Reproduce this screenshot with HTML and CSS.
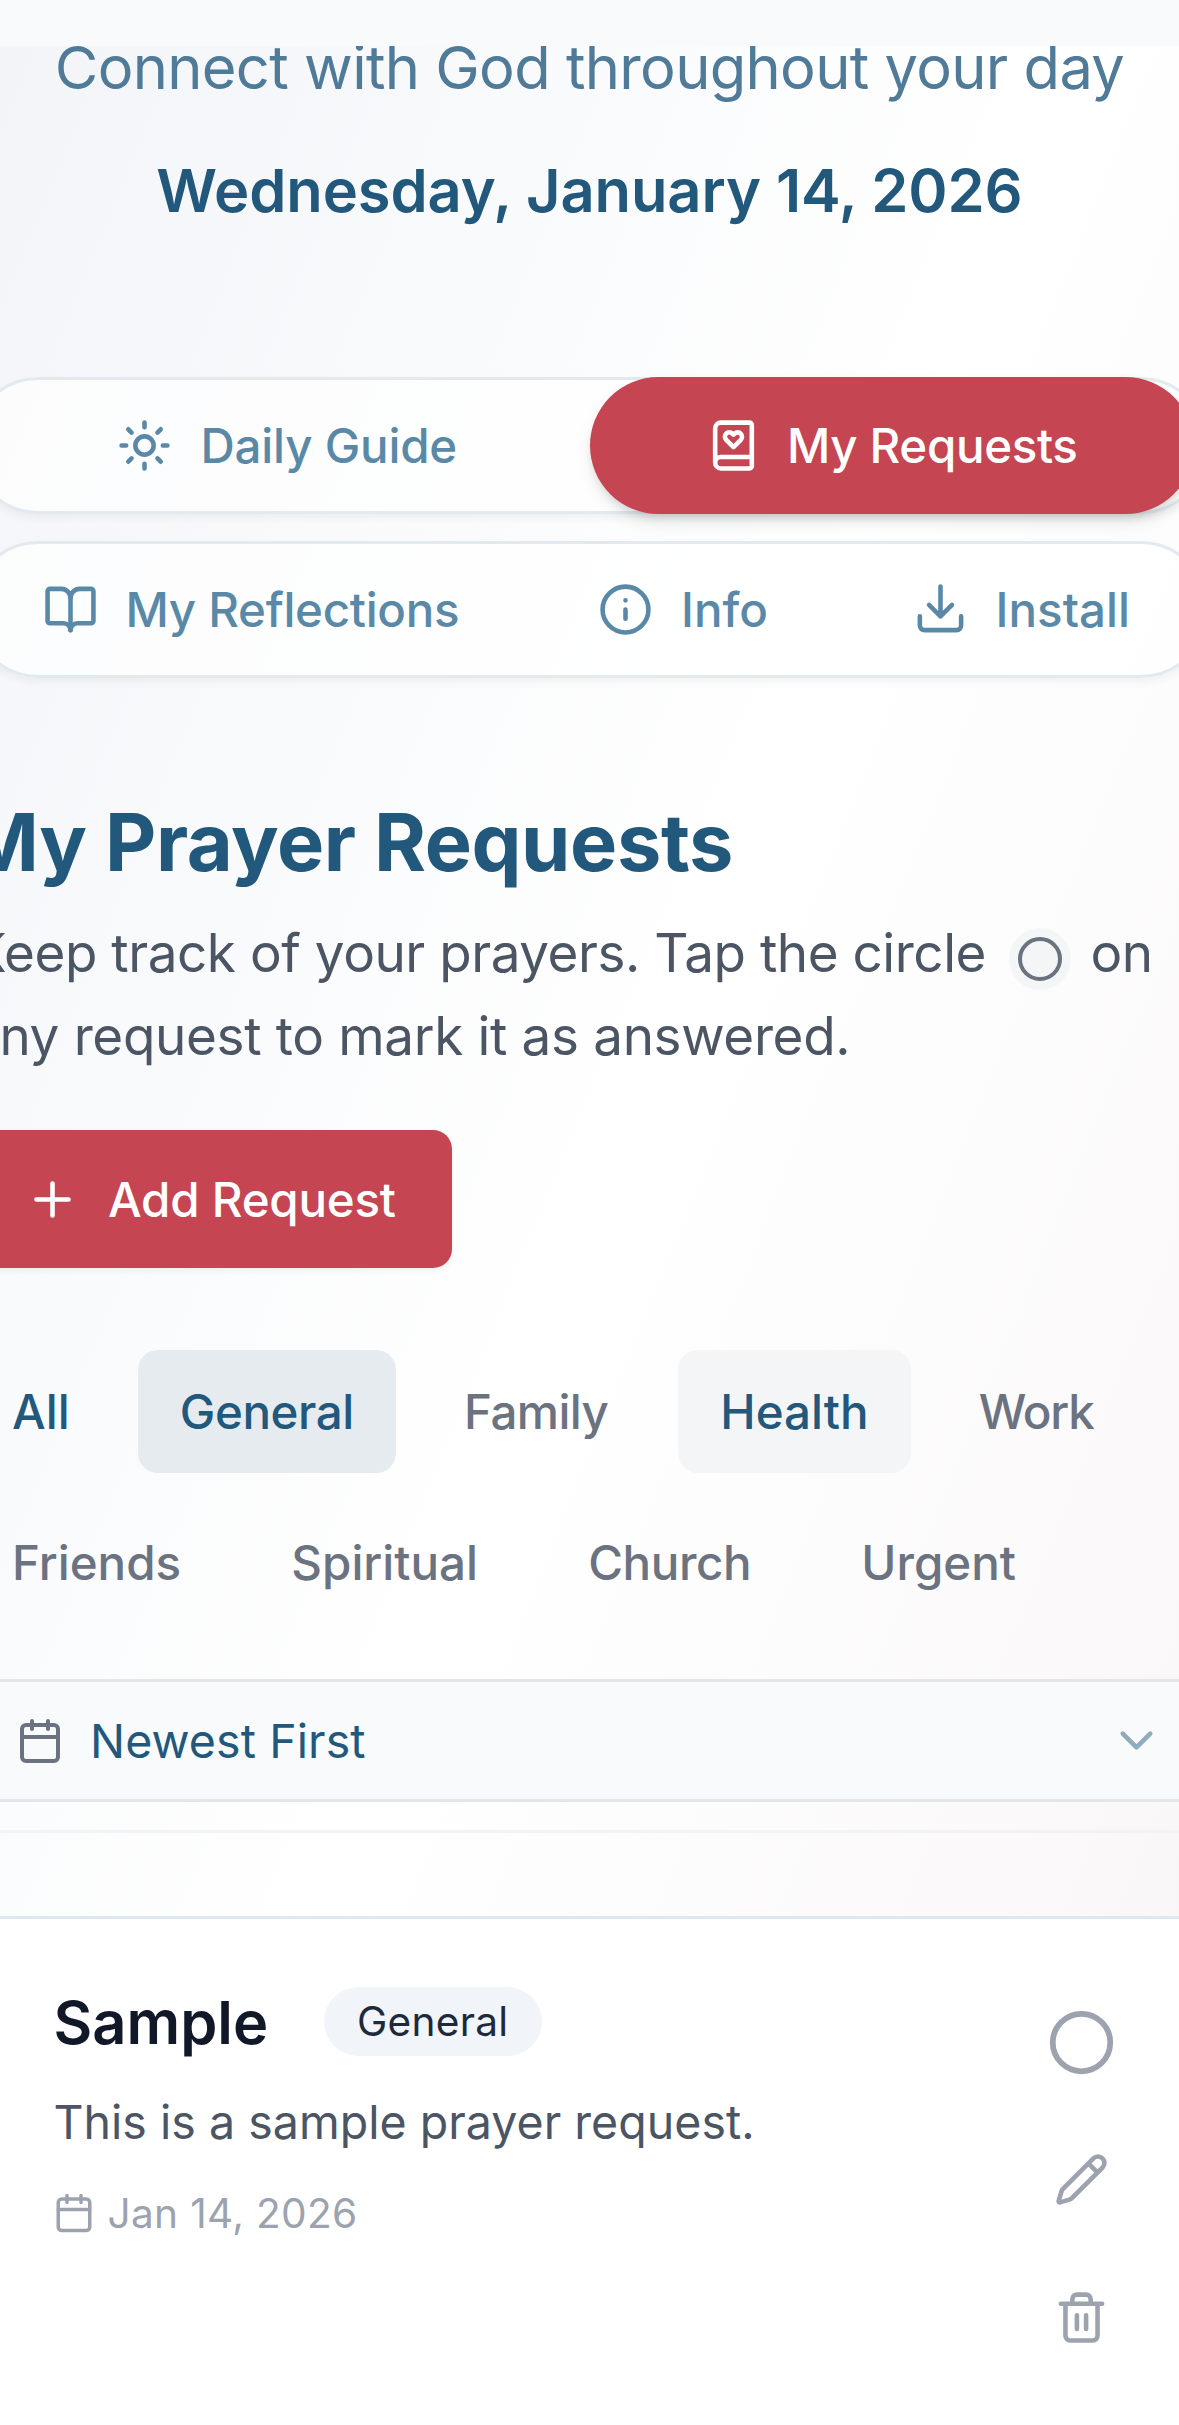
FILE: index.html
```html
<!DOCTYPE html>
<html lang="en">
<head>
<meta charset="utf-8">
<title>My Prayer Requests</title>
<link rel="stylesheet" href="styles.css">
</head>
<body>
<div class="statusbar"></div>
<div class="page">
  <header class="intro">
    <p class="tagline">Connect with God throughout your day</p>
    <p class="today">Wednesday, January 14, 2026</p>
  </header>

  <nav class="tabs">
    <div class="tab-row tab-row-split">
      <a class="tab"><svg class="icon" viewBox="0 0 24 24"><circle cx="12" cy="12" r="4"/><path d="M12 2v2M12 20v2M4.93 4.93l1.41 1.41M17.66 17.66l1.41 1.41M2 12h2M20 12h2M6.34 17.66l-1.41 1.41M19.07 4.93l-1.41 1.41"/></svg><span>Daily Guide</span></a>
      <a class="tab tab-active"><svg class="icon" viewBox="0 0 24 24"><path d="M4 19.5v-15A2.5 2.5 0 0 1 6.5 2H19a1 1 0 0 1 1 1v18a1 1 0 0 1-1 1H6.500a2.500 2.500 0 0 1 0-5H20"/><path d="M15.200 6.900a1.900 1.900 0 0 0-2.700-.1l-.5.5-.5-.5a1.900 1.900 0 0 0-2.700 2.700L12 12.700l3.200-3.200a1.900 1.900 0 0 0 0-2.600z"/></svg><span>My Requests</span></a>
    </div>
    <div class="tab-row tab-row-spread">
      <a class="tab tab-reflections"><svg class="icon" viewBox="0 0 24 24"><path d="M12 7v14"/><path d="M3 18a1 1 0 0 1-1-1V4a1 1 0 0 1 1-1h5a4 4 0 0 1 4 4 4 4 0 0 1 4-4h5a1 1 0 0 1 1 1v13a1 1 0 0 1-1 1h-6a3 3 0 0 0-3 3 3 3 0 0 0-3-3z"/></svg><span>My Reflections</span></a>
      <a class="tab tab-info"><svg class="icon" viewBox="0 0 24 24"><circle cx="12" cy="12" r="10"/><path d="M12 16v-4M12 8h.01"/></svg><span>Info</span></a>
      <a class="tab tab-install"><svg class="icon" viewBox="0 0 24 24"><path d="M21 15v4a2 2 0 0 1-2 2H5a2 2 0 0 1-2-2v-4"/><path d="m7 10 5 5 5-5M12 15V2"/></svg><span>Install</span></a>
    </div>
  </nav>

  <main>
    <h1 class="title">My Prayer Requests</h1>
    <p class="lead">Keep track of your prayers. Tap the circle <span class="hint"><svg viewBox="0 0 24 24"><circle cx="12" cy="12" r="10"/></svg></span> on<br><span class="lead-rest">any request to mark it as answered.</span></p>

    <button class="add"><svg class="icon" viewBox="0 0 24 24"><path d="M5 12h14M12 5v14"/></svg><span>Add Request</span></button>

    <div class="filters">
      <div class="filter-row">
        <button class="filter filter-blue">All</button>
        <button class="filter filter-blue filter-on snug">General</button>
        <button class="filter tight">Family</button>
        <button class="filter filter-blue filter-hover">Health</button>
        <button class="filter kerned">Work</button>
      </div>
      <div class="filter-row">
        <button class="filter">Friends</button>
        <button class="filter">Spiritual</button>
        <button class="filter snug">Church</button>
        <button class="filter">Urgent</button>
      </div>
    </div>

    <div class="sort">
      <svg class="sort-icon" viewBox="0 0 24 24"><path d="M8 2v4M16 2v4M3 10h18"/><rect x="3" y="4" width="18" height="18" rx="2"/></svg>
      <span class="sort-label">Newest First</span>
      <svg class="icon sort-arrow" viewBox="0 0 24 24"><path d="m6 9 6 6 6-6"/></svg>
    </div>

    <hr class="rule">

    <article class="card">
      <div class="card-body">
        <div class="card-head"><h2 class="card-title">Sample</h2><span class="badge">General</span></div>
        <p class="card-text">This is a sample prayer request.</p>
        <div class="card-date"><svg viewBox="0 0 24 24"><path d="M8 2v4M16 2v4M3 10h18"/><rect x="3" y="4" width="18" height="18" rx="2"/></svg><span>Jan 14, 2026</span></div>
      </div>
      <div class="actions">
        <button class="action"><svg class="ring" viewBox="0 0 24 24"><circle cx="12" cy="12" r="10"/></svg></button>
        <button class="action"><svg class="icon" viewBox="0 0 24 24"><path d="M21.174 6.812a1 1 0 0 0-3.986-3.987L3.842 16.174a2 2 0 0 0-.5.830l-1.321 4.352a.5.5 0 0 0 .623.622l4.353-1.320a2 2 0 0 0 .830-.497zM15 5l4 4"/></svg></button>
        <button class="action"><svg class="icon" viewBox="0 0 24 24"><path d="M3 6h18M19 6v14a2 2 0 0 1-2 2H7a2 2 0 0 1-2-2V6M8 6V4a2 2 0 0 1 2-2h4a2 2 0 0 1 2 2v2M10 11v6M14 11v6"/></svg></button>
      </div>
    </article>
  </main>
</div>
</body>
</html>
```
FILE: styles.css
```css
* { box-sizing: border-box; margin: 0; padding: 0; }

html { overflow: hidden; }

body {
  height: 2425px;
  overflow: hidden;
  position: relative;
  font-family: Inter, "Liberation Sans", sans-serif;
  background: linear-gradient(112deg, #f2f4f7 0%, #f8f9fb 22%, #ffffff 51%, #fbf9fa 82%, #f9f6f7 92%, #f8f4f4 100%);
}

button { font: inherit; border: 0; background: none; }

svg {
  display: block;
  flex: none;
  fill: none;
  stroke: currentColor;
  stroke-width: 2;
  stroke-linecap: round;
  stroke-linejoin: round;
}

.icon { width: 55px; height: 55px; }

/* Browser status area that covers the top of the scrolled page */
.statusbar {
  position: absolute;
  inset: 0 0 auto;
  height: 46px;
  background: #f9fafc;
  z-index: 1;
}

/* The column is wider than the window and is centred on it */
.page {
  width: 1239px;
  margin-left: -30px;
  padding-top: 25px;
}

.intro {
  display: flex;
  flex-direction: column;
  gap: 39px;
  text-align: center;
  font-size: 59.6px;
  line-height: 84px;
  white-space: nowrap;
}
.tagline { color: #4f7a98; letter-spacing: -0.69px; }
.today { color: #21587c; font-weight: 600; letter-spacing: -0.08px; }

.tabs {
  display: flex;
  flex-direction: column;
  gap: 27.500px;
  margin-top: 145px;
}
.tab-row {
  height: 136.500px;
  padding: 0 12px;
  display: flex;
  align-items: center;
  border: 3px solid #e3eaef;
  border-radius: 69px;
  background: rgba(255, 255, 255, 0.7);
  box-shadow: 0 4px 8px rgba(0, 0, 0, 0.05);
}
.tab {
  height: 137.500px;
  display: flex;
  align-items: center;
  justify-content: center;
  gap: 28px;
  color: #5a89a8;
  font-size: 47.500px;
  font-weight: 500;
  letter-spacing: -0.2px;
  white-space: nowrap;
}
.tab-row-split .tab { flex: 1; }
.tab-row-split .tab-active {
  gap: 26px;
  color: #fff;
  background: #c54552;
  border-radius: 69px;
  letter-spacing: -0.34px;
  box-shadow: 0 9px 18px -3px rgba(0, 0, 0, 0.12), 0 6px 10px -4px rgba(0, 0, 0, 0.12);
}
.tab-row-spread { justify-content: space-between; padding: 0 76px 0 69.500px; }
.tab-reflections { letter-spacing: -0.3px; }
.tab-info { margin-right: 6px; letter-spacing: 0; }
.tab-install { letter-spacing: 0; }

.title {
  margin: 116px 0 0 -5px;
  color: #21587c;
  font-size: 79.3px;
  line-height: 96px;
  font-weight: 700;
  letter-spacing: -0.41px;
  white-space: nowrap;
}

.lead {
  margin: 22.500px 0 0 1px;
  color: #4b5563;
  font-size: 53px;
  line-height: 83.3px;
  letter-spacing: -0.46px;
  white-space: nowrap;
}
.lead-rest { letter-spacing: -0.34px; margin-left: -1px; }
.hint {
  display: inline-flex;
  align-items: center;
  justify-content: center;
  width: 62px;
  height: 62px;
  margin: -10px 5px -10px 8.500px;
  vertical-align: -11px;
  border-radius: 50%;
  color: #6b7280;
  background: #f3f5f7;
}
.hint svg { width: 48px; height: 48px; margin-top: 1px; }

.add {
  display: flex;
  align-items: center;
  gap: 28px;
  height: 137.500px;
  margin-top: 51.500px;
  padding: 1px 56px 0 55px;
  border-radius: 19px;
  color: #fff;
  background: #c54552;
  box-shadow: 0 3px 6px rgba(0, 0, 0, 0.05);
  font-size: 47.500px;
  font-weight: 500;
  letter-spacing: -0.23px;
}

.filters {
  display: flex;
  flex-direction: column;
  gap: 27.500px;
  margin-top: 82px;
}
.filter-row { display: flex; gap: 26.200px; }
.filter {
  height: 123.300px;
  padding: 0 42px;
  border-radius: 20px;
  color: #6b7280;
  font-size: 47.500px;
  font-weight: 500;
}
.filter-blue { color: #21587c; }
.filter-on { background: #e6ebef; }
.filter-hover { margin-left: 2px; background: #f3f5f7; }
.snug { letter-spacing: -0.42px; }
.tight { letter-spacing: -0.6px; }
.kerned { letter-spacing: -1.2px; }

.sort {
  display: flex;
  align-items: center;
  height: 123.300px;
  margin-top: 55px;
  padding: 1px 42.500px 0;
  border: 3px solid #e2e6ea;
  border-radius: 20px;
  background: #f9fafc;
  color: #21587c;
  font-size: 46.500px;
}
.sort-icon { width: 48px; height: 48px; color: #6b7280; }
.sort-label { margin-left: 26.500px; letter-spacing: 0.1px; }
.sort-arrow { margin-left: auto; color: #8facbe; }

.rule { height: 3px; margin-top: 28px; border: 0; background: #f1f3f4; }

.card {
  display: flex;
  justify-content: space-between;
  height: 620px;
  margin-top: 83px;
  padding: 61px 63px 0 80.500px;
  border: 3px solid #dfe8ef;
  border-radius: 20px;
  background: #fff;
}
.card-head { display: flex; align-items: center; gap: 55.500px; height: 84px; }
.card-title { font-size: 59.6px; line-height: 84px; font-weight: 600; color: #111827; }
.badge {
  width: 218px;
  height: 69px;
  border-radius: 35px;
  background: #f1f4f9;
  color: #1e293b;
  font-size: 40.6px;
  line-height: 69px;
  letter-spacing: 0.3px;
  text-align: center;
}
.card-text {
  margin-top: 23.500px;
  color: #4b5563;
  font-size: 46.500px;
  line-height: 70px;
  letter-spacing: 0.03px;
}
.card-date {
  display: flex;
  align-items: center;
  gap: 13px;
  height: 56px;
  margin: 28px 0 0 -1px;
  color: #9ca3af;
  font-size: 40.6px;
  letter-spacing: 0.33px;
}
.card-date svg { width: 42px; height: 42px; }

.actions { display: flex; flex-direction: column; gap: 14.300px; padding-top: 1px; }
.action {
  width: 123px;
  height: 123px;
  display: flex;
  align-items: center;
  justify-content: center;
  color: #9ca3af;
}
.ring { width: 69px; height: 69px; }
```
